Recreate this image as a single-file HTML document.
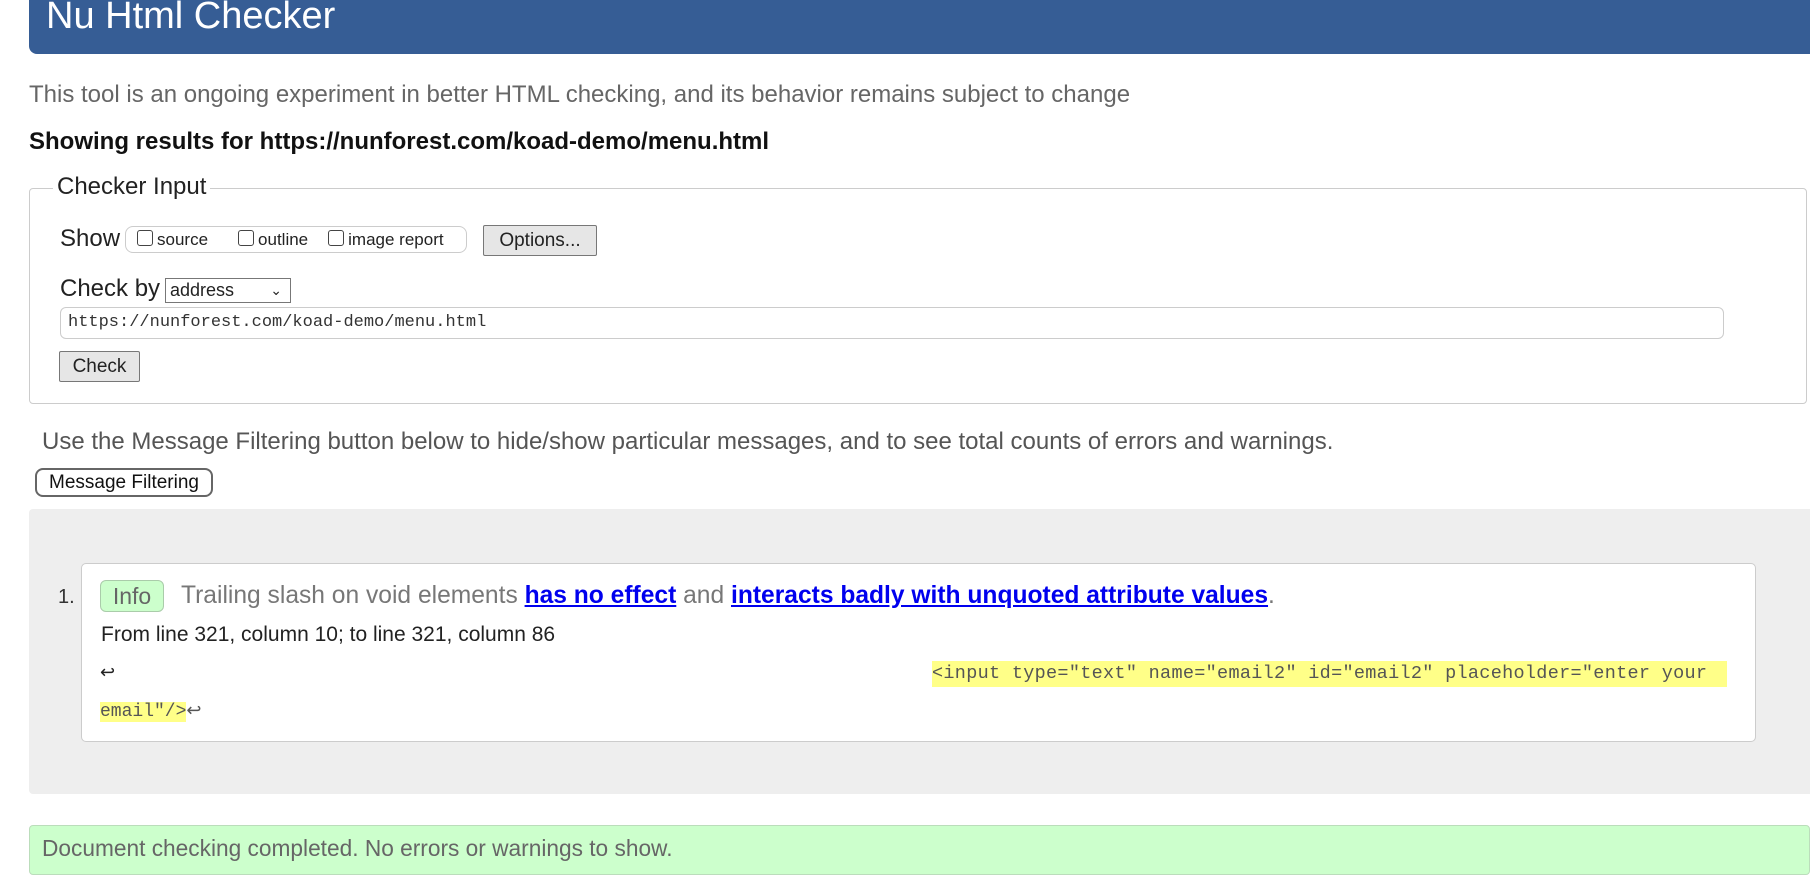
<!DOCTYPE html>
<html><head><meta charset="utf-8"><style>
body{margin:0;width:1810px;height:867px;background:#fff;font-family:"Liberation Sans",Arial,sans-serif;position:relative;overflow:hidden}
.a{position:absolute;white-space:nowrap}
.btn{position:absolute;background:#e6e6e6;border:1px solid #777;border-radius:2px;box-sizing:border-box;font-size:19px;color:#222;text-align:center}
.cb{display:inline-block;width:14px;height:14px;border:1px solid #444;border-radius:3px;vertical-align:-1px;margin-right:4px}
a{color:#00e;font-weight:bold;text-decoration:underline}
.mono{font-family:"Liberation Mono",monospace}
</style></head><body>
<div class="a" style="left:29px;top:0;width:1781px;height:54px;background:#365d95;border-radius:0 0 0 8px"></div>
<div class="a" style="left:46px;top:-4px;font-size:38px;color:#fff;line-height:40px">Nu Html Checker</div>
<div class="a" style="left:29px;top:81px;font-size:24px;color:#666;line-height:28px">This tool is an ongoing experiment in better HTML checking, and its behavior remains subject to change</div>
<div class="a" style="left:29px;top:128px;font-size:24px;font-weight:bold;color:#111;line-height:28px">Showing results for https://nunforest.com/koad-demo/menu.html</div>
<div class="a" style="left:29px;top:188px;width:1778px;height:216px;border:1px solid #ccc;border-radius:4px;box-sizing:border-box"></div>
<div class="a" style="left:53px;top:173px;font-size:24px;color:#222;background:#fff;padding:0 4px;line-height:28px">Checker Input</div>
<div class="a" style="left:60px;top:225px;font-size:24px;color:#222;line-height:28px">Show</div>
<div class="a" style="left:125px;top:226px;width:342px;height:27px;border:1px solid #ccc;border-radius:8px;box-sizing:border-box;font-size:17px;color:#222;line-height:25px;padding-left:11px"><span class="cb"></span>source<span style="display:inline-block;width:30px"></span><span class="cb"></span>outline<span style="display:inline-block;width:20px"></span><span class="cb"></span>image report</div>
<div class="btn" style="left:483px;top:225px;width:114px;height:31px;line-height:29px">Options...</div>
<div class="a" style="left:60px;top:275px;font-size:24px;color:#222;line-height:28px">Check by</div>
<div class="a" style="left:165px;top:278px;width:126px;height:25px;border:1px solid #777;box-sizing:border-box;font-size:18px;line-height:23px;padding-left:4px;color:#222">address<span style="position:absolute;right:8px;top:0;font-size:14px">&#8964;</span></div>
<div class="a mono" style="left:60px;top:307px;width:1664px;height:32px;border:1px solid #ccc;border-radius:6px;box-sizing:border-box;font-size:17px;line-height:30px;padding-left:7px;color:#333">https://nunforest.com/koad-demo/menu.html</div>
<div class="btn" style="left:59px;top:351px;width:81px;height:31px;line-height:29px">Check</div>
<div class="a" style="left:42px;top:428px;font-size:24px;color:#555;line-height:28px">Use the Message Filtering button below to hide/show particular messages, and to see total counts of errors and warnings.</div>
<div class="a" style="left:35px;top:468px;width:178px;height:29px;border:2px double #666;border-radius:8px;box-sizing:border-box;font-size:19px;line-height:25px;text-align:center;color:#111">Message Filtering</div>
<div class="a" style="left:29px;top:509px;width:1781px;height:285px;background:#eee;border-radius:4px 0 0 4px"></div>
<div class="a" style="left:81px;top:563px;width:1675px;height:179px;background:#fff;border:1px solid #ccc;border-radius:5px;box-sizing:border-box"></div>
<div class="a" style="left:58px;top:584px;font-size:20px;color:#333;line-height:26px">1.</div>
<div class="a" style="left:100px;top:580px;width:64px;height:32px;background:#cfc;border:1px solid #aca;border-radius:6px;box-sizing:border-box;font-size:23px;line-height:30px;text-align:center;color:#666">Info</div>
<div class="a" style="left:181px;top:582px;font-size:24.6px;line-height:28px;color:#777">Trailing slash on void elements <a>has no effect</a> and <a>interacts badly with unquoted attribute values</a>.</div>
<div class="a" style="left:101px;top:623px;font-size:21px;color:#222;line-height:24px">From line 321, column 10; to line 321, column 86</div>
<div class="a" style="left:100px;top:662px;font-size:18px;color:#222">&#8617;</div>
<div class="a mono" style="left:932px;top:661px;width:795px;height:26px;background:#ff8;font-size:18.5px;line-height:26px;color:#555;letter-spacing:0.3px">&lt;input type="text" name="email2" id="email2" placeholder="enter your</div>
<div class="a mono" style="left:100px;top:699px;font-size:18px;line-height:26px;color:#555"><span style="background:#ff8">email"/&gt;</span>&#8617;</div>
<div class="a" style="left:29px;top:825px;width:1781px;height:50px;background:#cfc;border:1px solid #bdb;border-radius:4px;box-sizing:border-box"></div>
<div class="a" style="left:42px;top:834px;font-size:22.7px;color:#666;line-height:28px">Document checking completed. No errors or warnings to show.</div>
</body></html>
